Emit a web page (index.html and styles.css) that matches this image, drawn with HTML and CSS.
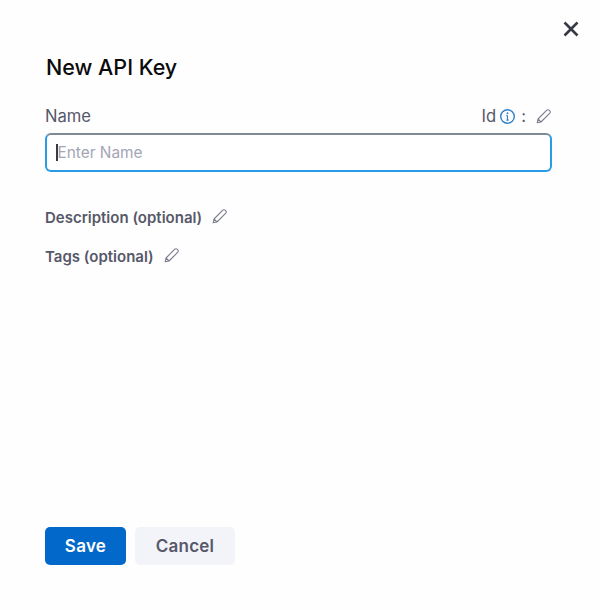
FILE: index.html
```html
<!DOCTYPE html>
<html lang="en">
<head>
<meta charset="utf-8">
<title>New API Key</title>
<link rel="stylesheet" href="styles.css">
</head>
<body>
<div class="dialog">
  <div class="close-row">
    <svg class="close" width="18" height="18" viewBox="0 0 18 18"><path d="M2.5 2.5l13 13M15.5 2.5l-13 13" stroke="#383946" stroke-width="2.6" fill="none"/></svg>
  </div>
  <h1 class="title">New API Key</h1>
  <div class="label-row">
    <span class="name-label">Name</span>
    <span class="id-group">
      <span class="id-text">Id</span>
      <svg class="info" width="17" height="17" viewBox="0 0 16 16"><circle cx="8" cy="8" r="6.4" fill="none" stroke="#2f7fc9" stroke-width="1.3"/><circle cx="8" cy="5" r="0.9" fill="#2f7fc9"/><path d="M8 7v4.4M6.9 7.1H8M6.9 11.4h2.2" stroke="#2f7fc9" stroke-width="1.1" fill="none"/></svg>
      <span class="id-colon">:</span>
      <svg class="pencil pencil-id" width="16" height="16" viewBox="0 0 16 16"><path d="M1.2 14.8l.8-3.8 8.8-8.8a1.6 1.6 0 0 1 2.3 0l.7.7a1.6 1.6 0 0 1 0 2.3l-8.8 8.8zM2 11l3 3" fill="none" stroke="#7b7d8c" stroke-width="1.1" stroke-linejoin="round"/></svg>
    </span>
  </div>
  <div class="input">
    <span class="caret"></span><span class="placeholder">Enter Name</span>
  </div>
  <div class="optional opt-desc">
    <span>Description (optional)</span>
    <svg class="pencil" width="16" height="16" viewBox="0 0 16 16"><path d="M1.2 14.8l.8-3.8 8.8-8.8a1.6 1.6 0 0 1 2.3 0l.7.7a1.6 1.6 0 0 1 0 2.3l-8.8 8.8zM2 11l3 3" fill="none" stroke="#7b7d8c" stroke-width="1.1" stroke-linejoin="round"/></svg>
  </div>
  <div class="optional opt-tags">
    <span>Tags (optional)</span>
    <svg class="pencil" width="16" height="16" viewBox="0 0 16 16"><path d="M1.2 14.8l.8-3.8 8.8-8.8a1.6 1.6 0 0 1 2.3 0l.7.7a1.6 1.6 0 0 1 0 2.3l-8.8 8.8zM2 11l3 3" fill="none" stroke="#7b7d8c" stroke-width="1.1" stroke-linejoin="round"/></svg>
  </div>
  <div class="actions">
    <button class="btn btn-primary" type="button">Save</button>
    <button class="btn btn-secondary" type="button">Cancel</button>
  </div>
</div>
</body>
</html>
```
FILE: styles.css
```css
* { box-sizing: border-box; }
html, body { margin: 0; padding: 0; background: #fff; }
body { width: 600px; height: 610px; overflow: hidden; font-family: Inter, "Liberation Sans", sans-serif; }
.dialog { display: flex; flex-direction: column; width: 600px; height: 610px; padding: 20px 48px 45px 45px; background: #fefefe; }
.close-row { display: flex; justify-content: flex-end; margin-right: -28px; height: 18px; }
.title { margin: 17px 0 0 1px; font-size: 21.5px; line-height: 24px; font-weight: 500; color: #0b0b0d; }
.label-row { display: flex; justify-content: space-between; align-items: center; margin-top: 27px; height: 20px; }
.name-label { font-size: 16.6px; color: #565869; }
.id-group { display: flex; align-items: center; font-size: 16.6px; color: #565869; }
.info { margin-left: 3px; }
.id-colon { margin-left: 5px; }
.pencil-id { margin-left: 10px; }
.input { display: flex; align-items: center; height: 39px; margin-top: 7px; padding-left: 9px; background: #fff; border: 2px solid #2a9be6; border-top-color: #7d8b96; border-radius: 6px; }
.caret { width: 1.5px; height: 17px; background: #3a3a48; }
.placeholder { font-size: 15.4px; color: #a3a5b4; }
.optional { display: flex; align-items: center; gap: 10px; font-size: 15px; font-weight: 600; color: #565869; height: 20px; }
.opt-desc { margin-top: 35px; }
.opt-tags { margin-top: 19px; }
.optional .pencil { position: relative; top: -1px; }
.actions { display: flex; gap: 9px; margin-top: auto; }
.btn { height: 38px; border: 0; border-radius: 5px; font-family: inherit; font-size: 17px; font-weight: 600; letter-spacing: 0.25px; padding: 0; }
.btn-primary { width: 81px; background: #0268c9; color: #fff; }
.btn-secondary { width: 100px; background: #f3f3fa; color: #565869; }
```
